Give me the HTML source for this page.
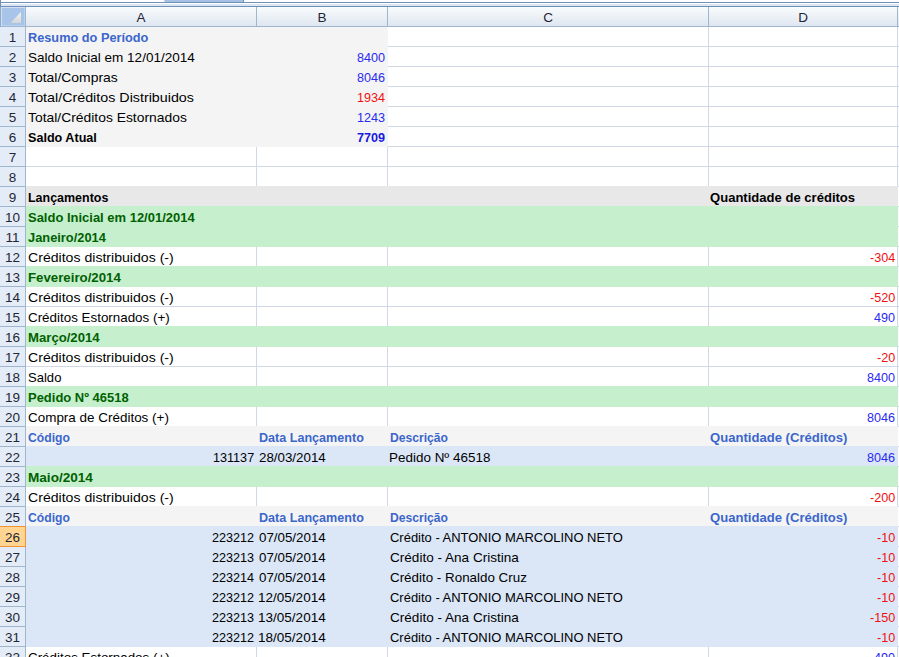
<!DOCTYPE html>
<html><head><meta charset="utf-8"><style>
html,body{margin:0;padding:0;width:899px;height:657px;overflow:hidden;background:#fff;position:relative}
div{position:absolute}
.t{position:absolute;font-family:"Liberation Sans",sans-serif;font-size:13.5px;line-height:19px;height:19px;white-space:nowrap;padding-top:1px;transform-origin:0 0}
.rn{position:absolute;width:25px;text-align:center;font-family:"Liberation Sans",sans-serif;font-size:13.5px;line-height:19px;padding-top:1px;color:#1f2736}
.cn{position:absolute;text-align:center;font-family:"Liberation Sans",sans-serif;font-size:13.5px;line-height:19px;padding-top:1px;color:#1f2736}
</style></head><body>
<div style="left:256px;top:27px;width:1px;height:630px;background:#d0d7e5"></div><div style="left:387px;top:27px;width:1px;height:630px;background:#d0d7e5"></div><div style="left:708px;top:27px;width:1px;height:630px;background:#d0d7e5"></div><div style="left:897px;top:27px;width:1px;height:630px;background:#d0d7e5"></div><div style="left:26px;top:46px;width:873px;height:1px;background:#d0d7e5"></div><div style="left:26px;top:66px;width:873px;height:1px;background:#d0d7e5"></div><div style="left:26px;top:86px;width:873px;height:1px;background:#d0d7e5"></div><div style="left:26px;top:106px;width:873px;height:1px;background:#d0d7e5"></div><div style="left:26px;top:126px;width:873px;height:1px;background:#d0d7e5"></div><div style="left:26px;top:146px;width:873px;height:1px;background:#d0d7e5"></div><div style="left:26px;top:166px;width:873px;height:1px;background:#d0d7e5"></div><div style="left:26px;top:186px;width:873px;height:1px;background:#d0d7e5"></div><div style="left:26px;top:206px;width:873px;height:1px;background:#d0d7e5"></div><div style="left:26px;top:226px;width:873px;height:1px;background:#d0d7e5"></div><div style="left:26px;top:246px;width:873px;height:1px;background:#d0d7e5"></div><div style="left:26px;top:266px;width:873px;height:1px;background:#d0d7e5"></div><div style="left:26px;top:286px;width:873px;height:1px;background:#d0d7e5"></div><div style="left:26px;top:306px;width:873px;height:1px;background:#d0d7e5"></div><div style="left:26px;top:326px;width:873px;height:1px;background:#d0d7e5"></div><div style="left:26px;top:346px;width:873px;height:1px;background:#d0d7e5"></div><div style="left:26px;top:366px;width:873px;height:1px;background:#d0d7e5"></div><div style="left:26px;top:386px;width:873px;height:1px;background:#d0d7e5"></div><div style="left:26px;top:406px;width:873px;height:1px;background:#d0d7e5"></div><div style="left:26px;top:426px;width:873px;height:1px;background:#d0d7e5"></div><div style="left:26px;top:446px;width:873px;height:1px;background:#d0d7e5"></div><div style="left:26px;top:466px;width:873px;height:1px;background:#d0d7e5"></div><div style="left:26px;top:486px;width:873px;height:1px;background:#d0d7e5"></div><div style="left:26px;top:506px;width:873px;height:1px;background:#d0d7e5"></div><div style="left:26px;top:526px;width:873px;height:1px;background:#d0d7e5"></div><div style="left:26px;top:546px;width:873px;height:1px;background:#d0d7e5"></div><div style="left:26px;top:566px;width:873px;height:1px;background:#d0d7e5"></div><div style="left:26px;top:586px;width:873px;height:1px;background:#d0d7e5"></div><div style="left:26px;top:606px;width:873px;height:1px;background:#d0d7e5"></div><div style="left:26px;top:626px;width:873px;height:1px;background:#d0d7e5"></div><div style="left:26px;top:646px;width:873px;height:1px;background:#d0d7e5"></div><div style="left:26px;top:666px;width:873px;height:1px;background:#d0d7e5"></div><div style="left:26px;top:27px;width:362px;height:120px;background:#f4f4f4"></div><div style="left:26px;top:186px;width:872px;height:21px;background:#e8e8e8"></div><div style="left:26px;top:206px;width:872px;height:21px;background:#c6efce"></div><div style="left:26px;top:226px;width:872px;height:21px;background:#c6efce"></div><div style="left:26px;top:266px;width:872px;height:21px;background:#c6efce"></div><div style="left:26px;top:326px;width:872px;height:21px;background:#c6efce"></div><div style="left:26px;top:386px;width:872px;height:21px;background:#c6efce"></div><div style="left:26px;top:426px;width:872px;height:21px;background:#f4f4f4"></div><div style="left:26px;top:446px;width:872px;height:21px;background:#dbe7f7"></div><div style="left:26px;top:466px;width:872px;height:21px;background:#c6efce"></div><div style="left:26px;top:506px;width:872px;height:21px;background:#f4f4f4"></div><div style="left:26px;top:526px;width:872px;height:21px;background:#dbe7f7"></div><div style="left:26px;top:546px;width:872px;height:21px;background:#dbe7f7"></div><div style="left:26px;top:566px;width:872px;height:21px;background:#dbe7f7"></div><div style="left:26px;top:586px;width:872px;height:21px;background:#dbe7f7"></div><div style="left:26px;top:606px;width:872px;height:21px;background:#dbe7f7"></div><div style="left:26px;top:626px;width:872px;height:21px;background:#dbe7f7"></div><span class="t" style="left:27.60px;top:27px;color:#3b66cc;font-weight:bold;transform:scaleX(0.9437)">Resumo do Período</span><span class="t" style="left:27.60px;top:47px;color:#000;transform:scaleX(1.0006)">Saldo Inicial em 12/01/2014</span><span class="t" style="left:357.32px;top:47px;color:#2a2af0;transform:scaleX(0.9340)">8400</span><span class="t" style="left:27.60px;top:67px;color:#000;transform:scaleX(1.0311)">Total/Compras</span><span class="t" style="left:357.32px;top:67px;color:#2a2af0;transform:scaleX(0.9340)">8046</span><span class="t" style="left:27.60px;top:87px;color:#000;transform:scaleX(1.0582)">Total/Créditos Distribuidos</span><span class="t" style="left:357.32px;top:87px;color:#f01010;transform:scaleX(0.9340)">1934</span><span class="t" style="left:27.60px;top:107px;color:#000;transform:scaleX(1.0276)">Total/Créditos Estornados</span><span class="t" style="left:357.32px;top:107px;color:#2a2af0;transform:scaleX(0.9340)">1243</span><span class="t" style="left:27.60px;top:127px;color:#000;font-weight:bold;transform:scaleX(0.9333)">Saldo Atual</span><span class="t" style="left:357.32px;top:127px;color:#1a1ae0;font-weight:bold;transform:scaleX(0.9340)">7709</span><span class="t" style="left:27.60px;top:187px;color:#000;font-weight:bold;transform:scaleX(0.9235)">Lançamentos</span><span class="t" style="left:710.30px;top:187px;color:#000;font-weight:bold;transform:scaleX(0.9671)">Quantidade de créditos</span><span class="t" style="left:27.60px;top:207px;color:#006100;font-weight:bold;transform:scaleX(0.9612)">Saldo Inicial em 12/01/2014</span><span class="t" style="left:27.60px;top:227px;color:#006100;font-weight:bold;transform:scaleX(0.9514)">Janeiro/2014</span><span class="t" style="left:27.60px;top:247px;color:#000;transform:scaleX(1.0443)">Créditos distribuidos (-)</span><span class="t" style="left:870.14px;top:247px;color:#f01010;transform:scaleX(0.9340)">-304</span><span class="t" style="left:27.60px;top:267px;color:#006100;font-weight:bold;transform:scaleX(0.9815)">Fevereiro/2014</span><span class="t" style="left:27.60px;top:287px;color:#000;transform:scaleX(1.0443)">Créditos distribuidos (-)</span><span class="t" style="left:870.14px;top:287px;color:#f01010;transform:scaleX(0.9340)">-520</span><span class="t" style="left:27.60px;top:307px;color:#000;transform:scaleX(0.9913)">Créditos Estornados (+)</span><span class="t" style="left:874.34px;top:307px;color:#2a2af0;transform:scaleX(0.9340)">490</span><span class="t" style="left:27.60px;top:327px;color:#006100;font-weight:bold;transform:scaleX(0.9738)">Março/2014</span><span class="t" style="left:27.60px;top:347px;color:#000;transform:scaleX(1.0443)">Créditos distribuidos (-)</span><span class="t" style="left:877.15px;top:347px;color:#f01010;transform:scaleX(0.9340)">-20</span><span class="t" style="left:27.60px;top:367px;color:#000;transform:scaleX(0.9671)">Saldo</span><span class="t" style="left:867.32px;top:367px;color:#2a2af0;transform:scaleX(0.9340)">8400</span><span class="t" style="left:27.60px;top:387px;color:#006100;font-weight:bold;transform:scaleX(0.9609)">Pedido Nº 46518</span><span class="t" style="left:27.60px;top:407px;color:#000;transform:scaleX(0.9962)">Compra de Créditos (+)</span><span class="t" style="left:867.32px;top:407px;color:#2a2af0;transform:scaleX(0.9340)">8046</span><span class="t" style="left:27.60px;top:427px;color:#3b66cc;font-weight:bold;transform:scaleX(0.9018)">Código</span><span class="t" style="left:258.70px;top:427px;color:#3b66cc;font-weight:bold;transform:scaleX(0.9316)">Data Lançamento</span><span class="t" style="left:389.80px;top:427px;color:#3b66cc;font-weight:bold;transform:scaleX(0.8990)">Descrição</span><span class="t" style="left:710.30px;top:427px;color:#3b66cc;font-weight:bold;transform:scaleX(0.9691)">Quantidade (Créditos)</span><span class="t" style="left:213.24px;top:447px;color:#000;transform:scaleX(0.9340)">131137</span><span class="t" style="left:258.70px;top:447px;color:#000;transform:scaleX(0.9874)">28/03/2014</span><span class="t" style="left:388.80px;top:447px;color:#000;transform:scaleX(0.9965)">Pedido Nº 46518</span><span class="t" style="left:867.32px;top:447px;color:#2a2af0;transform:scaleX(0.9340)">8046</span><span class="t" style="left:27.60px;top:467px;color:#006100;font-weight:bold;transform:scaleX(1.0058)">Maio/2014</span><span class="t" style="left:27.60px;top:487px;color:#000;transform:scaleX(1.0443)">Créditos distribuidos (-)</span><span class="t" style="left:870.14px;top:487px;color:#f01010;transform:scaleX(0.9340)">-200</span><span class="t" style="left:27.60px;top:507px;color:#3b66cc;font-weight:bold;transform:scaleX(0.9018)">Código</span><span class="t" style="left:258.70px;top:507px;color:#3b66cc;font-weight:bold;transform:scaleX(0.9316)">Data Lançamento</span><span class="t" style="left:389.80px;top:507px;color:#3b66cc;font-weight:bold;transform:scaleX(0.8990)">Descrição</span><span class="t" style="left:710.30px;top:507px;color:#3b66cc;font-weight:bold;transform:scaleX(0.9691)">Quantidade (Créditos)</span><span class="t" style="left:212.30px;top:527px;color:#000;transform:scaleX(0.9340)">223212</span><span class="t" style="left:258.70px;top:527px;color:#000;transform:scaleX(0.9874)">07/05/2014</span><span class="t" style="left:389.50px;top:527px;color:#000;transform:scaleX(0.9601)">Crédito - ANTONIO MARCOLINO NETO</span><span class="t" style="left:877.15px;top:527px;color:#f01010;transform:scaleX(0.9340)">-10</span><span class="t" style="left:212.30px;top:547px;color:#000;transform:scaleX(0.9340)">223213</span><span class="t" style="left:258.70px;top:547px;color:#000;transform:scaleX(0.9874)">07/05/2014</span><span class="t" style="left:389.50px;top:547px;color:#000;transform:scaleX(1.0043)">Crédito - Ana Cristina</span><span class="t" style="left:877.15px;top:547px;color:#f01010;transform:scaleX(0.9340)">-10</span><span class="t" style="left:212.30px;top:567px;color:#000;transform:scaleX(0.9340)">223214</span><span class="t" style="left:258.70px;top:567px;color:#000;transform:scaleX(0.9874)">07/05/2014</span><span class="t" style="left:389.50px;top:567px;color:#000;transform:scaleX(0.9913)">Crédito - Ronaldo Cruz</span><span class="t" style="left:877.15px;top:567px;color:#f01010;transform:scaleX(0.9340)">-10</span><span class="t" style="left:212.30px;top:587px;color:#000;transform:scaleX(0.9340)">223212</span><span class="t" style="left:257.70px;top:587px;color:#000;transform:scaleX(1.0021)">12/05/2014</span><span class="t" style="left:389.50px;top:587px;color:#000;transform:scaleX(0.9601)">Crédito - ANTONIO MARCOLINO NETO</span><span class="t" style="left:877.15px;top:587px;color:#f01010;transform:scaleX(0.9340)">-10</span><span class="t" style="left:212.30px;top:607px;color:#000;transform:scaleX(0.9340)">223213</span><span class="t" style="left:257.70px;top:607px;color:#000;transform:scaleX(1.0021)">13/05/2014</span><span class="t" style="left:389.50px;top:607px;color:#000;transform:scaleX(1.0043)">Crédito - Ana Cristina</span><span class="t" style="left:870.14px;top:607px;color:#f01010;transform:scaleX(0.9340)">-150</span><span class="t" style="left:212.30px;top:627px;color:#000;transform:scaleX(0.9340)">223212</span><span class="t" style="left:257.70px;top:627px;color:#000;transform:scaleX(1.0021)">18/05/2014</span><span class="t" style="left:389.50px;top:627px;color:#000;transform:scaleX(0.9601)">Crédito - ANTONIO MARCOLINO NETO</span><span class="t" style="left:877.15px;top:627px;color:#f01010;transform:scaleX(0.9340)">-10</span><span class="t" style="left:27.60px;top:647px;color:#000;transform:scaleX(0.9913)">Créditos Estornados (+)</span><span class="t" style="left:874.34px;top:647px;color:#2a2af0;transform:scaleX(0.9340)">490</span>
<div style="left:0;top:27px;width:25px;height:630px;background:#e4ecf7"></div><div style="left:25px;top:7px;width:1px;height:650px;background:#9eb6ce"></div><div style="left:0;top:46px;width:25px;height:1px;background:#9eb6ce"></div><span class="rn" style="left:0;top:27px">1</span><div style="left:0;top:66px;width:25px;height:1px;background:#9eb6ce"></div><span class="rn" style="left:0;top:47px">2</span><div style="left:0;top:86px;width:25px;height:1px;background:#9eb6ce"></div><span class="rn" style="left:0;top:67px">3</span><div style="left:0;top:106px;width:25px;height:1px;background:#9eb6ce"></div><span class="rn" style="left:0;top:87px">4</span><div style="left:0;top:126px;width:25px;height:1px;background:#9eb6ce"></div><span class="rn" style="left:0;top:107px">5</span><div style="left:0;top:146px;width:25px;height:1px;background:#9eb6ce"></div><span class="rn" style="left:0;top:127px">6</span><div style="left:0;top:166px;width:25px;height:1px;background:#9eb6ce"></div><span class="rn" style="left:0;top:147px">7</span><div style="left:0;top:186px;width:25px;height:1px;background:#9eb6ce"></div><span class="rn" style="left:0;top:167px">8</span><div style="left:0;top:206px;width:25px;height:1px;background:#9eb6ce"></div><span class="rn" style="left:0;top:187px">9</span><div style="left:0;top:226px;width:25px;height:1px;background:#9eb6ce"></div><span class="rn" style="left:0;top:207px">10</span><div style="left:0;top:246px;width:25px;height:1px;background:#9eb6ce"></div><span class="rn" style="left:0;top:227px">11</span><div style="left:0;top:266px;width:25px;height:1px;background:#9eb6ce"></div><span class="rn" style="left:0;top:247px">12</span><div style="left:0;top:286px;width:25px;height:1px;background:#9eb6ce"></div><span class="rn" style="left:0;top:267px">13</span><div style="left:0;top:306px;width:25px;height:1px;background:#9eb6ce"></div><span class="rn" style="left:0;top:287px">14</span><div style="left:0;top:326px;width:25px;height:1px;background:#9eb6ce"></div><span class="rn" style="left:0;top:307px">15</span><div style="left:0;top:346px;width:25px;height:1px;background:#9eb6ce"></div><span class="rn" style="left:0;top:327px">16</span><div style="left:0;top:366px;width:25px;height:1px;background:#9eb6ce"></div><span class="rn" style="left:0;top:347px">17</span><div style="left:0;top:386px;width:25px;height:1px;background:#9eb6ce"></div><span class="rn" style="left:0;top:367px">18</span><div style="left:0;top:406px;width:25px;height:1px;background:#9eb6ce"></div><span class="rn" style="left:0;top:387px">19</span><div style="left:0;top:426px;width:25px;height:1px;background:#9eb6ce"></div><span class="rn" style="left:0;top:407px">20</span><div style="left:0;top:446px;width:25px;height:1px;background:#9eb6ce"></div><span class="rn" style="left:0;top:427px">21</span><div style="left:0;top:466px;width:25px;height:1px;background:#9eb6ce"></div><span class="rn" style="left:0;top:447px">22</span><div style="left:0;top:486px;width:25px;height:1px;background:#9eb6ce"></div><span class="rn" style="left:0;top:467px">23</span><div style="left:0;top:506px;width:25px;height:1px;background:#9eb6ce"></div><span class="rn" style="left:0;top:487px">24</span><div style="left:0;top:526px;width:25px;height:1px;background:#9eb6ce"></div><span class="rn" style="left:0;top:507px">25</span><div style="left:0;top:546px;width:25px;height:1px;background:#9eb6ce"></div><div style="left:0;top:526px;width:26px;height:21px;background:#ffd591;box-shadow:inset -1px 1px 0 #f29436, inset 0 -1px 0 #f29436"></div><span class="rn" style="left:0;top:527px">26</span><div style="left:0;top:566px;width:25px;height:1px;background:#9eb6ce"></div><span class="rn" style="left:0;top:547px">27</span><div style="left:0;top:586px;width:25px;height:1px;background:#9eb6ce"></div><span class="rn" style="left:0;top:567px">28</span><div style="left:0;top:606px;width:25px;height:1px;background:#9eb6ce"></div><span class="rn" style="left:0;top:587px">29</span><div style="left:0;top:626px;width:25px;height:1px;background:#9eb6ce"></div><span class="rn" style="left:0;top:607px">30</span><div style="left:0;top:646px;width:25px;height:1px;background:#9eb6ce"></div><span class="rn" style="left:0;top:627px">31</span><div style="left:0;top:666px;width:25px;height:1px;background:#9eb6ce"></div><span class="rn" style="left:0;top:647px">32</span>
<div style="left:26px;top:7px;width:873px;height:19px;background:linear-gradient(#f9fcfd,#dfe6f0)"></div><div style="left:0;top:26px;width:899px;height:1px;background:#9eb6ce"></div><div style="left:256px;top:7px;width:1px;height:19px;background:#9eb6ce"></div><span class="cn" style="left:26px;width:230px;top:7px">A</span><div style="left:387px;top:7px;width:1px;height:19px;background:#9eb6ce"></div><span class="cn" style="left:257px;width:130px;top:7px">B</span><div style="left:708px;top:7px;width:1px;height:19px;background:#9eb6ce"></div><span class="cn" style="left:388px;width:320px;top:7px">C</span><div style="left:897px;top:7px;width:1px;height:19px;background:#9eb6ce"></div><span class="cn" style="left:709px;width:188px;top:7px">D</span>
<div style="left:0;top:0;width:899px;height:7px;background:#fff"></div><div style="left:164px;top:0;width:80px;height:2px;background:#a6c0e4;border-radius:0 0 0 3px"></div><div style="left:243px;top:0;width:1px;height:2px;background:#6d8fb8"></div><div style="left:0;top:2px;width:899px;height:1px;background:#6f91b9"></div><div style="left:1px;top:4px;width:898px;height:2px;background:#dae6f4"></div><div style="left:0;top:6px;width:899px;height:1px;background:#6f91b9"></div><div style="left:0;top:0;width:1px;height:7px;background:#6f91b9"></div><div style="left:0;top:7px;width:1px;height:20px;background:#8fa9c9"></div><div style="left:1px;top:7px;width:24px;height:19px;background:#a9c4e9;box-shadow:inset 1px 1px 0 #d3e1f3, inset -1px -1px 0 #b8d2f4"></div><svg style="position:absolute;left:0;top:0" width="30" height="30"><defs><linearGradient id="tg" x1="0" y1="0" x2="0" y2="1"><stop offset="0" stop-color="#f5f5f5"/><stop offset="1" stop-color="#d5d5d5"/></linearGradient></defs><polygon points="21,12 21,23 10.5,23" fill="url(#tg)"/></svg>
</body></html>
